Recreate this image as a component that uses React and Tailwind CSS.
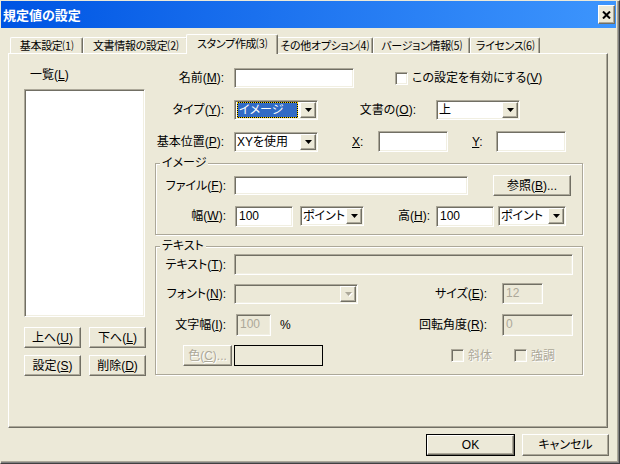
import React from "react";

const raised =
  "border border-t-white border-l-white border-r-[#716f64] border-b-[#716f64] shadow-[inset_-1px_-1px_0_#aca899] bg-[#ece9d8]";
const sunken =
  "border border-t-[#aca899] border-l-[#aca899] border-r-white border-b-white shadow-[inset_1px_1px_0_#716f64,inset_-1px_-1px_0_#f1efe2]";
const grayText = "text-[#aca899] [text-shadow:1px_1px_0_#fff]";

const Key = ({ k }) => <u className="underline-offset-1">{k}</u>;

// label like 名前(M):
const Lbl = ({ text, k, colon = true, className = "" }) => (
  <div className={`text-right whitespace-nowrap ${className}`}>
    {text}(<Key k={k} />){colon ? ":" : ""}
  </div>
);

const Arrow = ({ disabled }) => (
  <svg width="7" height="4" viewBox="0 0 7 4" className="overflow-visible">
    {disabled && <path d="M1 1h7L4.5 5z" fill="#fff" />}
    <path d="M0 0h7L3.5 4z" fill={disabled ? "#aca899" : "#000"} />
  </svg>
);

const Field = ({ className = "", value, disabled }) => (
  <div
    className={`${sunken} ${disabled ? "bg-[#ece9d8] text-[#aca899]" : "bg-white"} flex items-start pl-[3px] pt-[2px] ${className}`}
  >
    {value}
  </div>
);

const Combo = ({ className = "", value, selected, disabled }) => (
  <div className={`${sunken} ${disabled ? "bg-[#ece9d8]" : "bg-white"} flex p-[1px] ${className}`}>
    <div className="flex-1 min-w-0 flex items-center pl-[1px] pr-[2px] whitespace-nowrap overflow-hidden">
      {selected ? (
        <div className="bg-black w-full h-full">
          <div className="w-full h-full bg-[#316ac5] bg-clip-padding border border-dotted border-[#f5d000] text-white flex items-center pl-[1px]">
            {value}
          </div>
        </div>
      ) : (
        value
      )}
    </div>
    <div className={`${raised} w-[16px] shrink-0 flex items-center justify-center`}>
      <Arrow disabled={disabled} />
    </div>
  </div>
);

const Check = ({ disabled }) => (
  <div className={`${sunken} w-[13px] h-[13px] ${disabled ? "bg-[#ece9d8]" : "bg-white"}`} />
);

const Btn = ({ className = "", children, disabled, def }) =>
  def ? (
    <div className={`border border-black flex ${className}`}>
      <div className={`${raised} flex-1 flex items-center justify-center`}>{children}</div>
    </div>
  ) : (
    <div className={`${raised} flex items-center justify-center whitespace-nowrap ${disabled ? grayText : ""} ${className}`}>
      {children}
    </div>
  );

const Group = ({ title, className = "", children }) => (
  <div
    className={`w-[428px] border border-[#aca899] shadow-[inset_1px_1px_0_#fff,1px_1px_0_#fff] flex flex-col ${className}`}
  >
    <div className="-mt-[8px] ml-[4px] px-[2px] bg-[#ece9d8] w-fit h-[14px]">{title}</div>
    {children}
  </div>
);

const tabs = [
  { label: "基本設定⑴", w: "w-[73px]" },
  { label: "文書情報の設定⑵", w: "w-[105px]" },
  { label: "スタンプ作成⑶", w: "w-[92px]", active: true },
  { label: "その他オプション⑷", w: "w-[97px]" },
  { label: "バージョン情報⑸", w: "w-[97px]" },
  { label: "ライセンス⑹", w: "w-[70px]" },
];

export default function App() {
  return (
    <div className="w-[620px] h-[464px] bg-[#ece9d8] font-['Liberation_Sans','Noto_Sans_CJK_JP',sans-serif] [font-feature-settings:'palt'] text-[12px] leading-[14px] text-black border border-t-[#ece9d8] border-l-[#ece9d8] border-r-[#404040] border-b-[#404040] shadow-[inset_-1px_-1px_0_#808080,inset_-2px_-2px_0_#aca899] flex flex-col overflow-hidden select-none">
      {/* Title bar */}
      <div className="h-[27px] mr-[3px] flex items-center justify-between bg-linear-to-r from-[#0054e3] to-[#3d95fd] pl-[2px] pr-[1px]">
        <span className="text-white font-bold text-[13px] leading-[16px] font-['Noto_Sans_CJK_JP',sans-serif]">
          規定値の設定
        </span>
        <div className={`${raised} w-[17px] h-[19px] flex items-center justify-center`}>
          <svg width="9" height="8" viewBox="0 0 9 8">
            <path d="M1 0.5l7 7M8 0.5l-7 7" stroke="#000" strokeWidth="2" />
          </svg>
        </div>
      </div>

      {/* Tabs */}
      <div className="h-[25px] flex items-end pl-[9px] text-[11px] tracking-[-0.3px]">
        {tabs.map((t) =>
          t.active ? (
            <div
              key={t.label}
              className={`${t.w} h-[20px] -mx-[2px] -mb-[1px] relative z-10 bg-[#ece9d8] border-t border-l border-r border-t-white border-l-white border-r-[#716f64] shadow-[inset_-1px_0_0_#aca899] rounded-t-[2px] flex items-start justify-center pt-[2px] whitespace-nowrap`}
            >
              {t.label}
            </div>
          ) : (
            <div
              key={t.label}
              className={`${t.w} h-[16px] border-t border-l border-r border-t-white border-l-white border-r-[#716f64] shadow-[inset_-1px_0_0_#aca899] rounded-t-[2px] flex items-center justify-center whitespace-nowrap`}
            >
              {t.label}
            </div>
          )
        )}
      </div>

      {/* Tab panel */}
      <div className="ml-[7px] w-[600px] h-[375px] border border-t-white border-l-white border-r-[#716f64] border-b-[#716f64] shadow-[inset_-1px_-1px_0_#aca899] flex">
        {/* List column */}
        <div className="w-[146px] pl-[15px] pt-[14px] flex flex-col">
          <div className="ml-[6px] h-[14px]">
            一覧(<Key k="L" />)
          </div>
          <div className={`${sunken} bg-white mt-[7px] w-[121px] h-[228px]`} />
          <div className="flex gap-[8px] mt-[10px]">
            <Btn className="w-[57px] h-[21px]">
              上へ(<Key k="U" />)
            </Btn>
            <Btn className="w-[57px] h-[21px]">
              下へ(<Key k="L" />)
            </Btn>
          </div>
          <div className="flex gap-[8px] mt-[7px]">
            <Btn className="w-[57px] h-[21px]">
              設定(<Key k="S" />)
            </Btn>
            <Btn className="w-[57px] h-[21px]">
              削除(<Key k="D" />)
            </Btn>
          </div>
        </div>

        {/* Settings column */}
        <div className="flex flex-col pt-[14px]">
          <div className="flex items-center h-[20px]">
            <Lbl text="名前" k="M" className="w-[69px]" />
            <Field className="ml-[10px] w-[120px] h-[20px]" />
            <div className="ml-[41px]">
              <Check />
            </div>
            <div className="ml-[4px]">
              この設定を有効にする(<Key k="V" />)
            </div>
          </div>

          <div className="flex items-center h-[20px] mt-[12px]">
            <Lbl text="タイプ" k="Y" className="w-[69px]" />
            <Combo className="ml-[10px] w-[84px] h-[20px]" value="イメージ" selected />
            <Lbl text="文書の" k="O" className="w-[98px]" />
            <Combo className="ml-[20px] w-[84px] h-[20px]" value="上" />
          </div>

          <div className="flex items-center h-[21px] mt-[11px]">
            <Lbl text="基本位置" k="P" className="w-[69px]" />
            <Combo className="ml-[10px] w-[84px] h-[20px]" value="XYを使用" />
            <div className="w-[60px] pl-[34px]">
              <Key k="X" />:
            </div>
            <Field className="w-[70px] h-[21px]" />
            <div className="w-[48px] pl-[24px]">
              <Key k="Y" />:
            </div>
            <Field className="w-[70px] h-[21px]" />
          </div>

          <Group title="イメージ" className="mt-[11px] pb-[7px]">
            <div className="flex items-center h-[21px] mt-[5px]">
              <Lbl text="ファイル" k="F" className="w-[70px]" />
              <Field className="ml-[8px] w-[234px] h-[19px]" />
              <Btn className="ml-[25px] w-[78px] h-[21px]">
                参照(<Key k="B" />)...
              </Btn>
            </div>
            <div className="flex items-center h-[22px] mt-[9px]">
              <Lbl text="幅" k="W" className="w-[70px]" />
              <Field className="ml-[9px] w-[58px] h-[21px]" value="100" />
              <Combo className="ml-[7px] w-[64px] h-[20px]" value="ポイント" />
              <Lbl text="高" k="H" className="w-[66px]" />
              <Field className="ml-[6px] w-[58px] h-[21px]" value="100" />
              <Combo className="ml-[4px] w-[68px] h-[20px]" value="ポイント" />
            </div>
          </Group>

          <Group title="テキスト" className="mt-[11px] pb-[8px]">
            <div className="flex items-center h-[21px] mt-[1px]">
              <Lbl text="テキスト" k="T" className="w-[70px]" />
              <Field className="ml-[8px] w-[339px] h-[21px]" disabled />
            </div>
            <div className="flex items-center h-[21px] mt-[8px]">
              <Lbl text="フォント" k="N" className="w-[70px]" />
              <Combo className="ml-[8px] w-[124px] h-[20px]" disabled />
              <Lbl text="サイズ" k="E" className="w-[129px]" />
              <Field className="ml-[15px] w-[41px] h-[21px]" value="12" disabled />
            </div>
            <div className="flex items-center h-[22px] mt-[10px]">
              <Lbl text="文字幅" k="I" className="w-[70px]" />
              <Field className="ml-[10px] w-[35px] h-[22px]" value="100" disabled />
              <div className="w-[30px] pl-[9px]">%</div>
              <Lbl text="回転角度" k="R" className="w-[186px]" />
              <Field className="ml-[15px] w-[71px] h-[22px]" value="0" disabled />
            </div>
            <div className="flex items-center h-[21px] mt-[9px]">
              <Btn className="ml-[27px] w-[49px] h-[21px]" disabled>
                色(<Key k="C" />)...
              </Btn>
              <div className="ml-[2px] w-[89px] h-[21px] border border-black" />
              <div className="ml-[128px] w-[63px] flex items-center gap-[4px]">
                <Check disabled />
                <span className={grayText}>斜体</span>
              </div>
              <div className="flex items-center gap-[4px]">
                <Check disabled />
                <span className={grayText}>強調</span>
              </div>
            </div>
          </Group>
        </div>
      </div>

      {/* Dialog buttons */}
      <div className="flex mt-[6px] ml-[425px] gap-[7px]">
        <Btn className="w-[89px] h-[22px]" def>
          OK
        </Btn>
        <Btn className="w-[87px] h-[22px]">キャンセル</Btn>
      </div>
    </div>
  );
}
